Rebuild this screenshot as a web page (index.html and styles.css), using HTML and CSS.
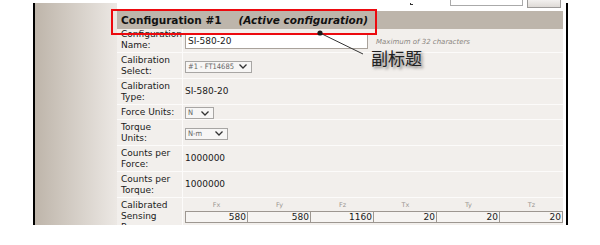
FILE: index.html
```html
<!DOCTYPE html>
<html>
<head>
<meta charset="utf-8">
<link rel="stylesheet" href="styles.css">
</head>
<body>
<div class="page">
  <div class="vline"></div>
  <div class="side"></div>
  <div class="main">
    <div class="topstrip"><span class="mark"></span><span class="tinput"></span><span class="tbtn"></span></div>
    <div class="hdr"><span>Configuration #1</span><em>(Active configuration)</em></div>
    <div class="row first">
      <div class="lab">Configuration<br>Name:</div>
      <div class="val"><span class="inp">SI-580-20</span><span class="hint">Maximum of 32 characters</span></div>
    </div>
    <div class="row">
      <div class="lab">Calibration<br>Select:</div>
      <div class="val"><span class="sel w67">#1 - FT14685<svg class="chev" width="8" height="5" viewBox="0 0 8 5"><path d="M0.5 0.5 L4 4 L7.5 0.5" fill="none" stroke="#333" stroke-width="1.3"/></svg></span></div>
    </div>
    <div class="row">
      <div class="lab">Calibration<br>Type:</div>
      <div class="val"><span class="txt">SI-580-20</span></div>
    </div>
    <div class="row">
      <div class="lab">Force Units:</div>
      <div class="val"><span class="sel w29">N<svg class="chev" width="8" height="5" viewBox="0 0 8 5"><path d="M0.5 0.5 L4 4 L7.5 0.5" fill="none" stroke="#333" stroke-width="1.3"/></svg></span></div>
    </div>
    <div class="row">
      <div class="lab">Torque<br>Units:</div>
      <div class="val"><span class="sel w43">N-m<svg class="chev" width="8" height="5" viewBox="0 0 8 5"><path d="M0.5 0.5 L4 4 L7.5 0.5" fill="none" stroke="#333" stroke-width="1.3"/></svg></span></div>
    </div>
    <div class="row">
      <div class="lab">Counts per<br>Force:</div>
      <div class="val"><span class="txt">1000000</span></div>
    </div>
    <div class="row">
      <div class="lab">Counts per<br>Torque:</div>
      <div class="val"><span class="txt">1000000</span></div>
    </div>
    <div class="row last">
      <div class="lab">Calibrated<br>Sensing<br>Range</div>
      <div class="val top">
        <div class="rng">
          <div class="h">Fx</div><div class="h">Fy</div><div class="h">Fz</div><div class="h">Tx</div><div class="h">Ty</div><div class="h">Tz</div>
          <div class="c">580</div><div class="c">580</div><div class="c">1160</div><div class="c">20</div><div class="c">20</div><div class="c">20</div>
        </div>
      </div>
    </div>
  </div>
  <div class="gap"></div>
  <div class="vline"></div>
</div>

<div class="redbox"></div>
<svg class="callout" width="600" height="245" viewBox="0 0 600 245">
  <line x1="320" y1="33" x2="363" y2="54" stroke="#333" stroke-width="1"/>
  <circle cx="320" cy="33" r="2.6" fill="#1a1a1a"/>
</svg>
<div class="note">副标题</div>
</body>
</html>
```
FILE: styles.css
```css
html, body {
  margin: 0;
  padding: 0;
  background: #fff;
}
body {
  font-family: "DejaVu Sans", Verdana, sans-serif;
  font-size: 9px;
  color: #1a1a1a;
  position: relative;
  width: 600px;
  height: 245px;
  overflow: hidden;
}
.page {
  display: flex;
  margin-left: 33px;
  height: 225px;
  overflow: hidden;
}
.vline {
  width: 2px;
  background: #000;
  margin-top: 3px;
}
.side {
  width: 82px;
  margin-top: 3px;
  background: linear-gradient(to right, #beb5aa, #ece8e4);
}
.main {
  width: 446px;
  display: flex;
  flex-direction: column;
}
.gap {
  width: 3px;
}
.topstrip {
  height: 11px;
  flex: none;
  display: flex;
  align-items: flex-start;
  padding-left: 293px;
  background: #fff;
}
.mark {
  width: 3px;
  height: 2px;
  margin-top: 3px;
  border-bottom: 1px solid #333;
  border-left: 1px solid #333;
  box-sizing: border-box;
}
.tinput {
  width: 73px;
  height: 6px;
  margin-left: 37px;
  background: #fff;
  border: 1px solid #aaa;
  border-top: none;
  box-sizing: border-box;
}
.tbtn {
  width: 34px;
  height: 8px;
  margin-left: 4px;
  background: linear-gradient(#f2f0ee, #dedad6);
  border: 1px solid #9c9a98;
  border-top: none;
  box-sizing: border-box;
}
.hdr {
  height: 18px;
  flex: none;
  background: #bdb5ab;
  display: flex;
  align-items: center;
  padding-left: 4px;
  font-weight: bold;
  font-size: 10.5px;
  color: #111;
  white-space: nowrap;
}
.hdr em {
  margin-left: 17px;
  font-style: italic;
}
.row {
  display: flex;
  flex: none;
  background: #f2efec;
  border-bottom: 1px solid #fcfbfa;
}
.lab {
  width: 66px;
  box-sizing: border-box;
  padding: 2px 0 1px 4px;
  line-height: 11px;
  border-right: 1px solid #fcfbfa;
  white-space: nowrap;
  color: #1a1a1a;
}
.first .lab {
  padding-top: 0;
}
.val {
  flex: 1;
  display: flex;
  align-items: center;
  padding-left: 2px;
  white-space: nowrap;
}
.val.top {
  align-items: flex-start;
}
.txt {
  line-height: 11px;
}
.inp {
  width: 183px;
  height: 16px;
  box-sizing: border-box;
  border: 1px solid #a9a29b;
  background: #fff;
  padding-left: 2px;
  line-height: 14px;
  font-size: 9px;
  margin-top: 1px;
}
.hint {
  margin-left: 8px;
  margin-top: 2px;
  font-size: 7px;
  font-style: italic;
  color: #8a8580;
}
.sel {
  height: 12px;
  box-sizing: border-box;
  border: 1px solid #a8a6a4;
  background: #f7f6f5;
  display: flex;
  align-items: center;
  justify-content: space-between;
  padding: 0 4px 0 2px;
  font-family: "DejaVu Sans Condensed", "DejaVu Sans", sans-serif;
  font-size: 7.5px;
  color: #666;
  line-height: 10px;
  margin-top: 2px;
  white-space: nowrap;
  overflow: hidden;
}
.w67 { width: 67px; }
.w29 { width: 29px; }
.w43 { width: 43px; }
.chev {
  flex: none;
  margin-left: 3px;
}
.rng {
  display: grid;
  grid-template-columns: repeat(6, 63px);
  margin-top: 2px;
}
.rng .h {
  height: 11px;
  line-height: 11px;
  text-align: center;
  font-size: 6.5px;
  color: #9a9590;
}
.rng .c {
  height: 12px;
  box-sizing: border-box;
  border: 1px solid #9d9791;
  border-left: none;
  background: #f6f4f2;
  text-align: right;
  padding-right: 1px;
  line-height: 10px;
  font-size: 9px;
}
.rng .c:nth-child(7) {
  border-left: 1px solid #9d9791;
}
.last {
  flex: 1;
}
.redbox {
  position: absolute;
  left: 111px;
  top: 9px;
  width: 266px;
  height: 26px;
  box-sizing: border-box;
  border: 2px solid #ec0a0f;
}
.callout {
  position: absolute;
  left: 0;
  top: 0;
}
.note {
  position: absolute;
  left: 371px;
  top: 48px;
  font-family: "Noto Sans CJK SC", sans-serif;
  font-size: 17px;
  line-height: 20px;
  color: #222;
  text-shadow: 2px 2px 3px rgba(0, 0, 0, 0.5);
}
```
